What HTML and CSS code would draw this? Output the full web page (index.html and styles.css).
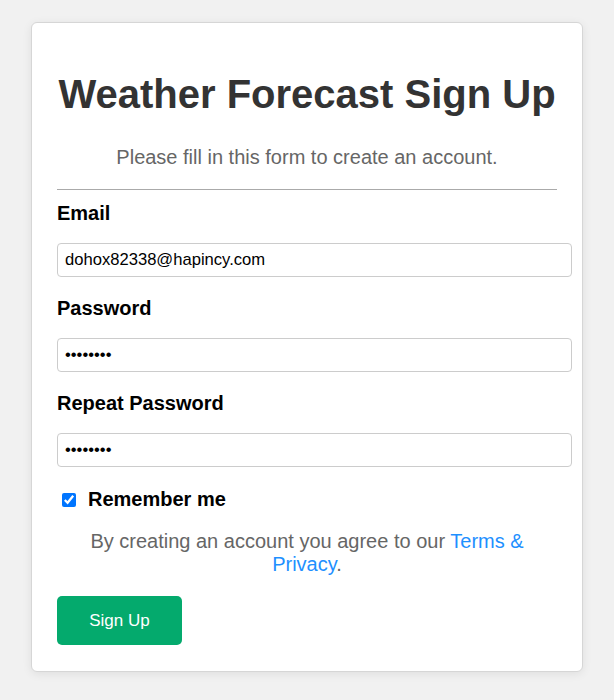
FILE: index.html
```html
<!DOCTYPE html>
<html lang="en">
<head>
<meta charset="utf-8">
<title>Weather Forecast Sign Up</title>
<link rel="stylesheet" href="styles.css">
</head>
<body>
<form class="card">
  <h1 class="title">Weather Forecast Sign Up</h1>
  <p class="subtitle">Please fill in this form to create an account.</p>
  <hr class="rule">
  <label class="label" for="email">Email</label>
  <input class="field" id="email" type="text" value="dohox82338@hapincy.com">
  <label class="label" for="psw">Password</label>
  <input class="field" id="psw" type="password" value="password">
  <label class="label" for="psw2">Repeat Password</label>
  <input class="field" id="psw2" type="password" value="password">
  <label class="remember"><input class="check" type="checkbox" checked> Remember me</label>
  <p class="terms">By creating an account you agree to our <a class="link" href="#">Terms &amp; Privacy</a>.</p>
  <button class="btn" type="button">Sign Up</button>
</form>
</body>
</html>
```
FILE: styles.css
```css
html, body {
  margin: 0;
  background: #f1f1f1;
  font-family: "Liberation Sans", Arial, sans-serif;
}
body {
  padding: 22px 0 20px;
}
.card {
  display: block;
  width: 500px;
  margin: 0 auto;
  padding: 25px 25px 26px;
  background: #fff;
  border: 1px solid #d6d6d6;
  border-radius: 6px;
  box-shadow: 0 2px 10px rgba(0,0,0,0.08);
}
.title {
  margin: 24px 0 0;
  font-size: 40px;
  font-weight: bold;
  color: #333;
  text-align: center;
}
.subtitle {
  margin: 29px 0 0;
  font-size: 20px;
  color: #666;
  text-align: center;
}
.rule {
  margin: 20px 0 0;
  border: 0;
  border-top: 1px solid #aaa;
  height: 0;
}
.label {
  display: block;
  margin-top: 12px;
  font-size: 20px;
  line-height: 23px;
  font-weight: bold;
  color: #000;
}
.field {
  display: block;
  margin: 18px 0 0;
  padding: 7px;
  font-family: "Liberation Sans", Arial, sans-serif;
  font-size: 16.6px;
  color: #000;
  border: 1px solid #ccc;
  border-radius: 4px;
  height: 18px;
  width: 499px;
}
.field + .label {
  margin-top: 20px;
}
.remember {
  display: flex;
  align-items: center;
  gap: 12px;
  margin-top: 21px;
  padding-left: 5px;
  font-size: 20px;
  line-height: 23px;
  font-weight: bold;
  color: #000;
}
.check {
  margin: 0;
  width: 14px;
  height: 14px;
  accent-color: #0075ff;
}
.terms {
  margin: 19px 0 0;
  font-size: 20px;
  line-height: 23px;
  color: #666;
  text-align: center;
}
.link {
  color: #1e90ff;
  text-decoration: none;
}
.btn {
  margin-top: 20px;
  width: 125px;
  height: 49px;
  background: #04aa6d;
  color: #fff;
  border: 0;
  border-radius: 5px;
  font-family: "Liberation Sans", Arial, sans-serif;
  font-size: 17px;
  padding: 0;
}
```
